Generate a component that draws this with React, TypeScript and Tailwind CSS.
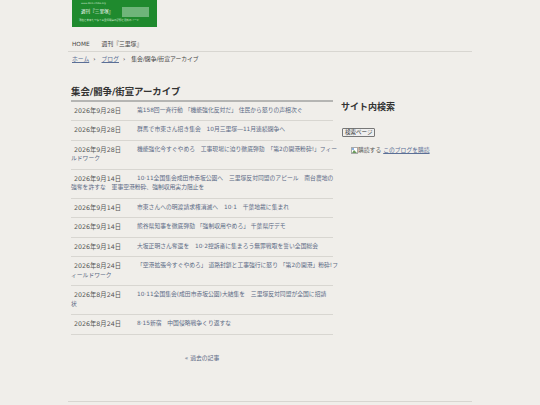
const rows = [
  ["2026年9月28日", "第158回一斉行動 「機能強化反対だ」 住民から怒りの声相次ぐ"],
  ["2026年9月28日", "群馬で市東さん招き集会　10月三里塚―11月連続闘争へ"],
  ["2026年9月28日", "機能強化今すぐやめろ　工事現場に迫り徹底弾劾　「第2の開港粉砕!」フィー\nルドワーク"],
  ["2026年9月14日", "10·11全国集会成田市赤坂公園へ　三里塚反対同盟のアピール　南台農地の\n強奪を許すな　軍事空港粉砕、強制収用実力阻止を"],
  ["2026年9月14日", "市東さんへの明渡請求権消滅へ　10·1　千葉地裁に集まれ"],
  ["2026年9月14日", "熊谷県知事を徹底弾劾 「強制収用やめろ」 千葉県庁デモ"],
  ["2026年9月14日", "大坂正明さん奪還を　10·2控訴審に集まろう無罪戦取を誓い全国総会"],
  ["2026年8月24日", "「空港拡張今すぐやめろ」 道路封鎖と工事強行に怒り 「第2の開港」粉砕!フ\nィールドワーク"],
  ["2026年8月24日", "10·11全国集会(成田市赤坂公園)大結集を　三里塚反対同盟が全国に招請\n状"],
  ["2026年8月24日", "8·15新宿　中国侵略戦争くり返すな"],
];

export default function App() {
  return (
    <div className="h-[405px] w-[540px] overflow-hidden bg-[#f0eeea] text-[5.8px] leading-[9.5px] text-[#555] [font-family:'DejaVu_Sans','Noto_Sans_CJK_JP',sans-serif]">
      <div className="mx-auto w-[404px]">
        <div className="ml-1 flex h-[27px] w-[85px] flex-col bg-[#1f8a2e] pt-[2px] pl-[9px] text-white">
          <div className="text-[2.5px] leading-[3px] text-[#cfe6d3]">www.doro-chiba.org</div>
          <div className="mt-[2px] flex items-center">
            <span className="w-[41px] text-[4.6px] leading-[10px]">週刊『三里塚』</span>
            <div className="h-[10px] w-[27px] bg-[#6fb57a]" />
          </div>
          <div className="mt-[2px] -ml-[2px] text-[2.5px] leading-[3px] whitespace-nowrap text-[#d5ebd8]">現在と未来をつなぐ三里塚闘争の記録と資料のページ</div>
        </div>
        <div className="flex h-[24.5px] items-end gap-3 border-b border-[#d8d6d1] px-1 pb-[1px] text-[#444]">
          <span>HOME</span>
          <span>週刊『三里塚』</span>
        </div>
        <div className="flex h-[17px] items-center gap-[4px] px-1 text-[#444]">
          <span className="text-[#5b6f96] underline">ホーム</span><span>›</span>
          <span className="ml-[2px] text-[#5b6f96] underline">ブログ</span><span>›</span>
          <span className="ml-[2px]">集会/闘争/街宣アーカイブ</span>
        </div>
        <div className="flex">
          <div className="ml-[3px] w-[262px]">
            <h1 className="mt-[16px] h-[15px] text-[9.4px] leading-[14px] font-bold text-[#333]">集会/闘争/街宣アーカイブ</h1>
            <div className="h-[2px] bg-[#b5b5b3]" />
            {rows.map(([d, t], i) => (
              <div key={i} className="border-b border-[#d8d6d1] pt-[4px] pb-[5px] leading-[9.5px] whitespace-pre">
                <span className="ml-[3px] inline-block w-[63px] align-top text-[6.3px] leading-[9.5px] text-[#555]">{d}</span>
                <span className="align-top leading-[9.5px] text-[#5b6a85]">{t}</span>
              </div>
            ))}
            <div className="mt-[19px] text-center text-[#5b6a85]">« 過去の記事</div>
          </div>
          <div className="ml-[8px] w-[127px]">
            <h2 className="mt-[31px] text-[9px] leading-[14px] font-bold text-[#333]">サイト内検索</h2>
            <button className="mt-[14px] ml-[1px] block h-[9px] rounded-[1px] border border-[#777] bg-[#efefef] px-[2px] text-[5.5px] leading-[6px] text-[#333]">検索ページ</button>
            <div className="mt-[9px] ml-[10px] flex items-center gap-[2px]">
              <span className="flex items-center text-[#555]">
                <svg width="7" height="7" viewBox="0 0 7 7" className="shrink-0">
                  <rect x="0.5" y="0.5" width="6" height="6" fill="#fff" stroke="#aaa" />
                  <path d="M1 6 L3 3 L6 6 Z" fill="#6a9a5b" />
                  <rect x="1" y="1" width="2" height="2" fill="#8ab0e0" />
                </svg>
                購読する
              </span>
              <span className="text-[#5b6f96] underline">このブログを購読</span>
            </div>
          </div>
        </div>
        <div className="mt-[38px] border-t border-[#d8d6d1]" />
      </div>
    </div>
  );
}
